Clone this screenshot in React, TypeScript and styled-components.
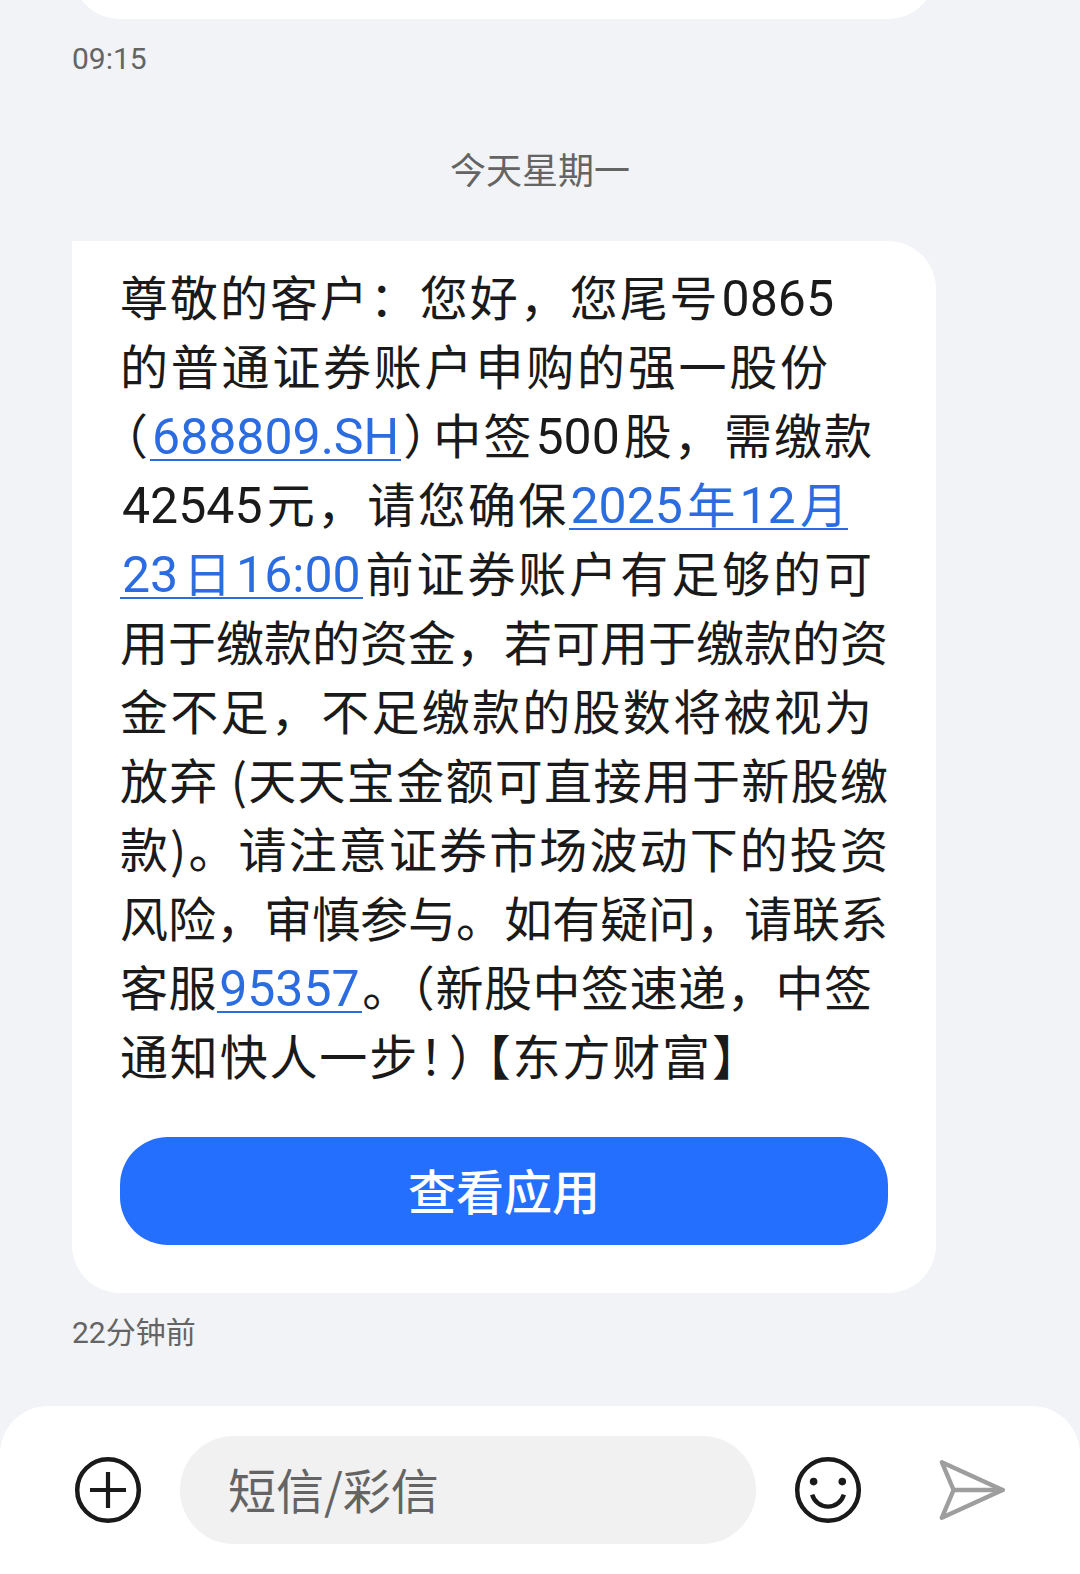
import React from "react";
import styled, { createGlobalStyle } from "styled-components";

const GlobalStyle = createGlobalStyle`
  *, *::before, *::after { box-sizing: border-box; }
  body {
    margin: 0;
    background: #f1f3f7;
    color: #1a1a1a;
    font-family: "Noto Sans CJK SC", "Noto Sans", sans-serif;
  }
  button, input { font: inherit; color: inherit; }
`;

const Page = styled.div`
  min-height: 100vh;
  display: flex;
  flex-direction: column;
`;

const Thread = styled.main`
  flex: 1;
  display: flex;
  flex-direction: column;
  align-items: stretch;
  padding: 0 144px 48px 72px;
`;

const PreviousBubble = styled.div`
  height: 19px;
  overflow: hidden;

  &::before {
    content: "";
    display: block;
    height: 96px;
    margin-top: -77px;
    border-radius: 48px;
    background: #fff;
  }
`;

const Stamp = styled.time`
  display: block;
  margin-top: 16px;
  font-family: Roboto, "Noto Sans CJK SC", sans-serif;
  font-size: 30px;
  line-height: 48px;
  color: #646464;
`;

const DayLabel = styled.h2`
  margin: 58px -72px 46px 0;
  font-size: 36px;
  line-height: 54px;
  font-weight: 400;
  text-align: center;
  color: #646464;
`;

const Bubble = styled.article`
  display: flex;
  flex-direction: column;
  gap: 48px;
  padding: 20px 48px 48px;
  border-radius: 0 48px 48px 48px;
  background: #fff;
`;

const Message = styled.p`
  margin: 0;
  font-size: 48px;
  line-height: 69px;
`;

const Line = styled.span<{ $inset?: number }>`
  display: block;
  padding-right: ${(p) => p.$inset ?? 0}px;
  text-align: justify;
  text-align-last: justify;
`;

const Latin = styled.span`
  padding: 0 2px;
  font-family: Roboto, sans-serif;
  font-size: 50px;
  line-height: 1;
`;

const Mark = styled.span<{ $before?: number; $after?: number }>`
  font-feature-settings: "halt";
  padding-left: ${(p) => p.$before ?? 0}px;
  padding-right: ${(p) => p.$after ?? 0}px;
`;

/* The rule is a background so that it also runs under the padding of Latin. */
const Link = styled.a`
  color: #2b6de0;
  text-decoration: none;
  background: linear-gradient(currentColor, currentColor) left bottom 7px / 100%
    2px no-repeat;
`;

const ActionButton = styled.button`
  width: 100%;
  height: 108px;
  padding: 0 0 4px;
  border: 0;
  border-radius: 48px;
  background: #256fff;
  color: #fff;
  font-size: 48px;
  font-weight: 500;
  line-height: 72px;
`;

const Composer = styled.form`
  display: flex;
  align-items: center;
  gap: 36px;
  padding: 30px 72px;
  border-radius: 48px 48px 0 0;
  background: #fff;
`;

const Field = styled.input`
  flex: 1;
  min-width: 0;
  height: 108px;
  padding: 0 48px 4px;
  border: 0;
  border-radius: 54px;
  outline: 0;
  background: #f1f1f1;
  font-size: 48px;

  &::placeholder {
    color: #646464;
    opacity: 1;
  }
`;

const Actions = styled.div`
  display: flex;
  gap: 72px;
`;

const IconButton = styled.button<{ $muted?: boolean }>`
  flex: none;
  width: 72px;
  height: 72px;
  padding: 0;
  border: 0;
  background: none;
  color: ${(p) => (p.$muted ? "#9e9e9e" : "#1a1a1a")};

  svg {
    display: block;
    width: 100%;
    height: 100%;
  }
`;

const PlusIcon = () => (
  <svg viewBox="0 0 72 72" fill="none" stroke="currentColor" aria-hidden="true">
    <circle cx="36" cy="36" r="30.8" strokeWidth="4.5" />
    <path d="M36 18v36M18 36h36" strokeWidth="4.2" strokeLinecap="butt" />
  </svg>
);

const SmileIcon = () => (
  <svg viewBox="0 0 72 72" fill="none" stroke="currentColor" aria-hidden="true">
    <circle cx="36" cy="36" r="30.8" strokeWidth="4.5" />
    <circle cx="21.6" cy="27.6" r="3.8" fill="currentColor" stroke="none" />
    <circle cx="50.3" cy="27.6" r="3.8" fill="currentColor" stroke="none" />
    <path d="M20.2 40.6a16.4 16.4 0 0 0 31.6 0" strokeWidth="4.4" />
  </svg>
);

const SendIcon = () => (
  <svg
    viewBox="0 0 72 72"
    fill="none"
    stroke="currentColor"
    strokeWidth="4.4"
    strokeLinejoin="round"
    strokeLinecap="round"
    aria-hidden="true"
  >
    <path d="M5.8 8.2L66.6 36L5.8 63.8L17.6 36Z" />
    <path d="M17.6 36h49" />
  </svg>
);

export default function App() {
  return (
    <>
      <GlobalStyle />
      <Page>
        <Thread>
          <PreviousBubble />
          <Stamp>09:15</Stamp>
          <DayLabel>今天星期一</DayLabel>
          <Bubble>
            <Message>
              <Line $inset={52}>
                尊敬的客户：您好，您尾号<Latin>0865</Latin>
              </Line>
              <Line $inset={60}>的普通证券账户申购的强一股份</Line>
              <Line $inset={16}>
                <Mark $before={4}>（</Mark>
                <Link href="#stock">
                  <Latin>688809.SH</Latin>
                </Link>
                <Mark $after={4}>）</Mark>中签<Latin>500</Latin>股，需缴款
              </Line>
              <Line $inset={40}>
                <Latin>42545</Latin>元，请您确保
                <Link href="#date">
                  <Latin>2025</Latin>年<Latin>12</Latin>月
                </Link>
              </Line>
              <Line $inset={16}>
                <Link href="#date">
                  <Latin>23</Latin>日<Latin>16:00</Latin>
                </Link>
                前证券账户有足够的可
              </Line>
              <Line>用于缴款的资金，若可用于缴款的资</Line>
              <Line $inset={16}>金不足，不足缴款的股数将被视为</Line>
              <Line>
                放弃<Mark $before={12}>(</Mark>天天宝金额可直接用于新股缴
              </Line>
              <Line>款)。请注意证券市场波动下的投资</Line>
              <Line>风险，审慎参与。如有疑问，请联系</Line>
              <Line $inset={16}>
                客服
                <Link href="tel:95357">
                  <Latin>95357</Latin>
                </Link>
                。<Mark>（</Mark>新股中签速递，中签
              </Line>
              <Line $inset={152}>
                通知快人一步<Mark>！</Mark>
                <Mark $before={4} $after={12}>
                  ）
                </Mark>
                <Mark>【</Mark>东方财富<Mark>】</Mark>
              </Line>
            </Message>
            <ActionButton type="button">查看应用</ActionButton>
          </Bubble>
          <Stamp>22分钟前</Stamp>
        </Thread>
        <Composer onSubmit={(e) => e.preventDefault()}>
          <IconButton type="button" aria-label="添加">
            <PlusIcon />
          </IconButton>
          <Field type="text" aria-label="短信/彩信" placeholder="短信/彩信" />
          <Actions>
            <IconButton type="button" aria-label="表情">
              <SmileIcon />
            </IconButton>
            <IconButton type="submit" aria-label="发送" $muted>
              <SendIcon />
            </IconButton>
          </Actions>
        </Composer>
      </Page>
    </>
  );
}
